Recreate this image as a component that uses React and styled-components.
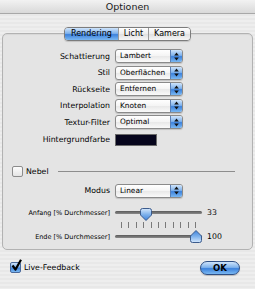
import React from "react";
import styled, { createGlobalStyle } from "styled-components";

const GlobalStyle = createGlobalStyle`
  html, body {
    margin: 0;
    padding: 0;
  }
  body {
    font-family: "DejaVu Sans", "Lucida Grande", sans-serif;
    color: #000;
    width: 255px;
    height: 289px;
    overflow: hidden;
  }
`;

const aquaBlue = "linear-gradient(to bottom, #cfe4fb 0%, #7fb2ec 45%, #3d82dc 55%, #7ab8f2 100%)";

function App() {
  return (
    <Window>
      <GlobalStyle />
      <TitleBar>Optionen</TitleBar>

      <Tabs>
        <Tab $active>Rendering</Tab>
        <Tab>Licht</Tab>
        <Tab>Kamera</Tab>
      </Tabs>

      <GroupBox>
        <Row>
          <Label>Schattierung</Label>
          <Popup value="Lambert" />
        </Row>
        <Row $gap={2.6}>
          <Label>Stil</Label>
          <Popup value="Oberflächen" />
        </Row>
        <Row $gap={2.6}>
          <Label>Rückseite</Label>
          <Popup value="Entfernen" />
        </Row>
        <Row $gap={2.6}>
          <Label>Interpolation</Label>
          <Popup value="Knoten" />
        </Row>
        <Row $gap={2.6}>
          <Label>Textur-Filter</Label>
          <Popup value="Optimal" />
        </Row>
        <Row $gap={4.6}>
          <Label>Hintergrundfarbe</Label>
          <Swatch />
        </Row>

        <NebelRow>
          <Checkbox />
          <CheckLabel>Nebel</CheckLabel>
          <Rule />
        </NebelRow>

        <Row $gap={6.5}>
          <Label>Modus</Label>
          <Popup value="Linear" />
        </Row>

        <SliderRow $gap={8}>
          <SmallLabel>Anfang [% Durchmesser]</SmallLabel>
          <Slider value={33} />
          <Value>33</Value>
        </SliderRow>
        <SliderRow $gap={2}>
          <span />
          <Ticks>
            {Array.from({ length: 11 }).map((_, i) => (
              <Tick key={i} />
            ))}
          </Ticks>
          <span />
        </SliderRow>
        <SliderRow $gap={1}>
          <SmallLabel>Ende [% Durchmesser]</SmallLabel>
          <Slider value={100} up />
          <Value>100</Value>
        </SliderRow>
      </GroupBox>

      <Footer>
        <CheckItem>
          <Checkbox checked />
          <CheckLabel>Live-Feedback</CheckLabel>
        </CheckItem>
        <OkButton>OK</OkButton>
      </Footer>
    </Window>
  );
}

function Popup({ value }) {
  return (
    <PopupBox>
      <PopupText>{value}</PopupText>
      <PopupCap>
        <svg width="5" height="9" viewBox="0 0 5 9">
          <path d="M2.5 0.5 L4.8 3.5 H0.2 Z" fill="#111" />
          <path d="M2.5 8.5 L4.8 5.5 H0.2 Z" fill="#111" />
        </svg>
      </PopupCap>
    </PopupBox>
  );
}

function Checkbox({ checked }) {
  return (
    <Box $checked={checked}>
      {checked && (
        <CheckMark width="11" height="13" viewBox="0 0 11 13">
          <path
            d="M1.5 6.5 L4.5 10.5 L10 0.8"
            fill="none"
            stroke="#000"
            strokeWidth="2.2"
            strokeLinejoin="round"
          />
        </CheckMark>
      )}
    </Box>
  );
}

function Slider({ value, up }) {
  const left = 6 + (value / 100) * 75;
  return (
    <Track>
      <TrackLine />
      <Thumb $up={up} style={{ left: `${left - 6}px` }}>
        <svg width="12" height="13" viewBox="0 0 12 13">
          <defs>
            <linearGradient id={up ? "tu" : "td"} x1="0" y1="0" x2="0" y2="1">
              <stop offset="0" stopColor={up ? "#3d82dc" : "#d6e8fc"} />
              <stop offset="0.5" stopColor="#7fb2ec" />
              <stop offset="1" stopColor={up ? "#d6e8fc" : "#3d82dc"} />
            </linearGradient>
          </defs>
          <path
            d={
              up
                ? "M6 0.5 L11.5 6 V10.5 Q11.5 12.5 9.5 12.5 H2.5 Q0.5 12.5 0.5 10.5 V6 Z"
                : "M2.5 0.5 H9.5 Q11.5 0.5 11.5 2.5 V7 L6 12.5 L0.5 7 V2.5 Q0.5 0.5 2.5 0.5 Z"
            }
            fill={`url(#${up ? "tu" : "td"})`}
            stroke="#3b5b8c"
            strokeWidth="1"
          />
        </svg>
      </Thumb>
    </Track>
  );
}

const Window = styled.div`
  width: 255px;
  height: 289px;
  display: flex;
  flex-direction: column;
  background: repeating-linear-gradient(
    to bottom,
    #eeeeee 0px,
    #eeeeee 2px,
    #e8e8e8 2px,
    #e8e8e8 4px
  );
`;

const TitleBar = styled.div`
  height: 13px;
  line-height: 13px;
  border-bottom: 1px solid #a8a8a8;
  background: linear-gradient(to bottom, #f2f2f2, #d9d9d9);
  text-align: center;
  font-size: 9.5px;
  color: #1a1a1a;
`;

const Tabs = styled.div`
  position: relative;
  z-index: 1;
  display: flex;
  margin: 13px auto 0;
  height: 12px;
  border: 1px solid #7c7c7c;
  border-radius: 4px;
  overflow: hidden;
  box-shadow: 0 1px 1px rgba(0, 0, 0, 0.15);
`;

const Tab = styled.div`
  height: 12px;
  line-height: 12px;
  padding: 0 ${(p) => (p.$active ? "6px" : "5px")};
  font-size: 8px;
  background: ${(p) =>
    p.$active ? aquaBlue : "linear-gradient(to bottom, #ffffff, #ececec 50%, #e0e0e0 51%, #f6f6f6)"};
  & + & {
    border-left: 1px solid #9a9a9a;
  }
`;

const GroupBox = styled.div`
  margin: -8px 2px 0;
  padding: 15px 0 5px;
  border: 1px solid #b2b2b2;
  border-radius: 5px;
  background: #e4e4e4;
  box-shadow: inset 0 1px 1px rgba(0, 0, 0, 0.06);
`;

const Row = styled.div`
  display: grid;
  grid-template-columns: 107px auto;
  column-gap: 5px;
  align-items: center;
  margin-top: ${(p) => p.$gap || 0}px;
`;

const Label = styled.span`
  text-align: right;
  font-size: 7.8px;
  white-space: nowrap;
`;

const SmallLabel = styled(Label)`
  font-size: 6.5px;
`;

const PopupBox = styled.div`
  display: flex;
  width: 68px;
  height: 14px;
  box-sizing: border-box;
  border: 1px solid #8a8a8a;
  border-radius: 3px;
  overflow: hidden;
  background: linear-gradient(to bottom, #ffffff, #f4f4f4 50%, #e8e8e8 51%, #fafafa);
  box-shadow: 0 1px 1px rgba(0, 0, 0, 0.15);
`;

const PopupText = styled.span`
  flex: 1;
  padding-left: 4px;
  font-size: 7.4px;
  line-height: 12px;
  white-space: nowrap;
  overflow: hidden;
`;

const PopupCap = styled.span`
  width: 11px;
  flex-shrink: 0;
  display: flex;
  align-items: center;
  justify-content: center;
  border-left: 1px solid #5b7fb4;
  background: ${aquaBlue};
`;

const Swatch = styled.div`
  width: 42px;
  height: 12px;
  box-sizing: border-box;
  border: 1px solid #6a6a6a;
  background: #06051c;
`;

const NebelRow = styled.div`
  display: flex;
  align-items: center;
  margin-top: 20.5px;
  padding: 0 17px 0 9px;
`;

const Box = styled.span`
  position: relative;
  width: 11px;
  height: 11px;
  box-sizing: border-box;
  flex-shrink: 0;
  border: 1px solid ${(p) => (p.$checked ? "#4a6a9c" : "#8c8c8c")};
  border-radius: 2px;
  background: ${(p) =>
    p.$checked ? aquaBlue : "linear-gradient(to bottom, #fdfdfd, #e4e4e4)"};
`;

const CheckMark = styled.svg`
  position: absolute;
  left: 0;
  top: -4px;
`;

const CheckLabel = styled.span`
  margin-left: 3px;
  font-size: 7.8px;
`;

const Rule = styled.div`
  flex: 1;
  height: 1px;
  margin-left: 9px;
  background: #8d8d8d;
`;

const SliderRow = styled.div`
  display: grid;
  grid-template-columns: 107px 87px auto;
  column-gap: 5px;
  align-items: center;
  margin-top: ${(p) => p.$gap || 0}px;
`;

const Track = styled.div`
  position: relative;
  height: 14px;
  display: flex;
  align-items: center;
`;

const TrackLine = styled.div`
  width: 100%;
  height: 3px;
  border-radius: 2px;
  background: linear-gradient(to bottom, #5a5a5a, #8a8a8a);
`;

const Thumb = styled.div`
  position: absolute;
  top: ${(p) => (p.$up ? "0px" : "2px")};
  width: 12px;
  height: 13px;
  line-height: 0;
`;

const Ticks = styled.div`
  display: flex;
  justify-content: space-between;
  padding: 0 6px;
  height: 7px;
`;

const Tick = styled.span`
  width: 1px;
  height: 6px;
  background: #7a7a7a;
`;

const Value = styled.span`
  font-size: 7.8px;
`;

const Footer = styled.div`
  display: flex;
  align-items: center;
  justify-content: space-between;
  margin-top: 11px;
  padding: 0 15px 0 10px;
  height: 14px;
`;

const CheckItem = styled.div`
  display: flex;
  align-items: center;
`;

const OkButton = styled.button`
  width: 40px;
  height: 14px;
  padding: 0;
  border: 1px solid #2f4f84;
  border-radius: 7px;
  background: ${aquaBlue};
  font-family: inherit;
  font-size: 8.5px;
  font-weight: bold;
  color: #000;
  box-shadow: 0 1px 1px rgba(0, 0, 0, 0.2);
`;

export default App;
